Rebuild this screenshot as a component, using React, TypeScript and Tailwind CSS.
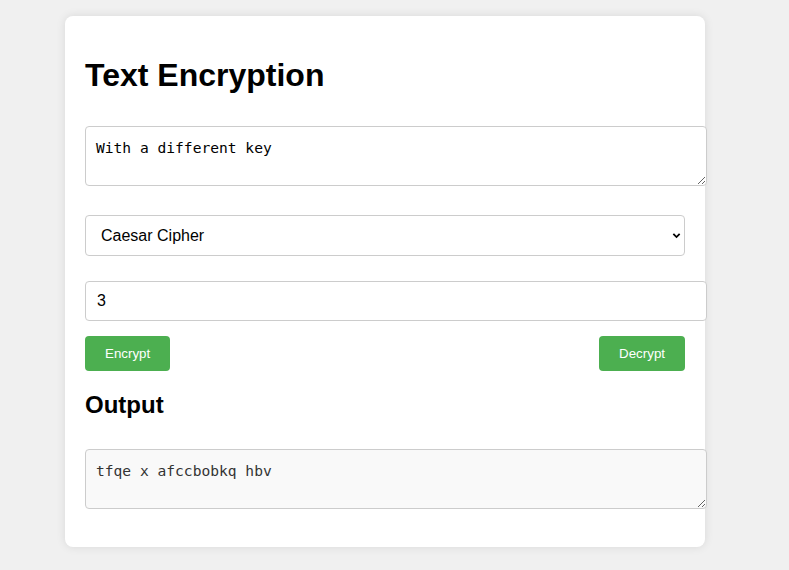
import { useState } from 'react'

const fieldClass =
  'block rounded-[4px] border border-[#cccccc] text-[16px] text-black outline-none'

const monoClass =
  "block h-[60px] w-[622px] rounded-[4px] border border-[#cccccc] px-[10px] pb-[8px] pt-[11px] font-['DejaVu_Sans_Mono',monospace] text-[14.6px] leading-[19px] outline-none"

export default function App() {
  const [text, setText] = useState('With a different key')
  const [cipher, setCipher] = useState('caesar')
  const [shift, setShift] = useState('3')
  const output = 'tfqe x afccbobkq hbv'

  return (
    <div className="min-h-[570px] bg-[#f0f0f0] pl-[65px] pt-[16px] font-['Liberation_Sans',Arial,sans-serif]">
      <div className="w-[640px] rounded-[8px] bg-white px-[20px] pb-[38px] pt-[20px] shadow-[0_0_10px_rgba(0,0,0,0.1)]">
        <h1 className="mt-[21px] text-[32px] font-bold leading-[37px] text-black">Text Encryption</h1>

        <textarea
          value={text}
          onChange={(e) => setText(e.target.value)}
          className={monoClass + ' mt-[32px] bg-white text-black'}
        />

        <div className="relative mt-[29px] w-[600px]">
          <select
            value={cipher}
            onChange={(e) => setCipher(e.target.value)}
            className={fieldClass + ' h-[41px] w-[600px] appearance-none bg-white pl-[15px]'}
          >
            <option value="caesar">Caesar Cipher</option>
            <option value="vigenere">Vigenère Cipher</option>
          </select>
          <svg
            className="pointer-events-none absolute right-[4px] top-[16px]"
            width="9"
            height="9"
            viewBox="0 0 10 10"
          >
            <path d="M1.5 3.2 L5 6.7 L8.5 3.2" fill="none" stroke="#000" strokeWidth="2" />
          </svg>
        </div>

        <input
          type="text"
          value={shift}
          onChange={(e) => setShift(e.target.value)}
          className={fieldClass + ' mt-[25px] h-[40px] w-[622px] bg-white px-[11px]'}
        />

        <div className="mt-[15px] flex w-[600px] items-center justify-between">
          <button className="h-[35px] cursor-pointer rounded-[4px] bg-[#4caf50] px-[20px] text-[13.33px] font-medium text-white">
            Encrypt
          </button>
          <button className="h-[35px] cursor-pointer rounded-[4px] bg-[#4caf50] px-[20px] text-[13.33px] font-medium text-white">
            Decrypt
          </button>
        </div>

        <h2 className="mt-[20px] text-[24px] font-bold leading-[28px] text-black">Output</h2>

        <textarea readOnly value={output} className={monoClass + ' mt-[30px] bg-[#f9f9f9] text-[#333333]'} />
      </div>
    </div>
  )
}
